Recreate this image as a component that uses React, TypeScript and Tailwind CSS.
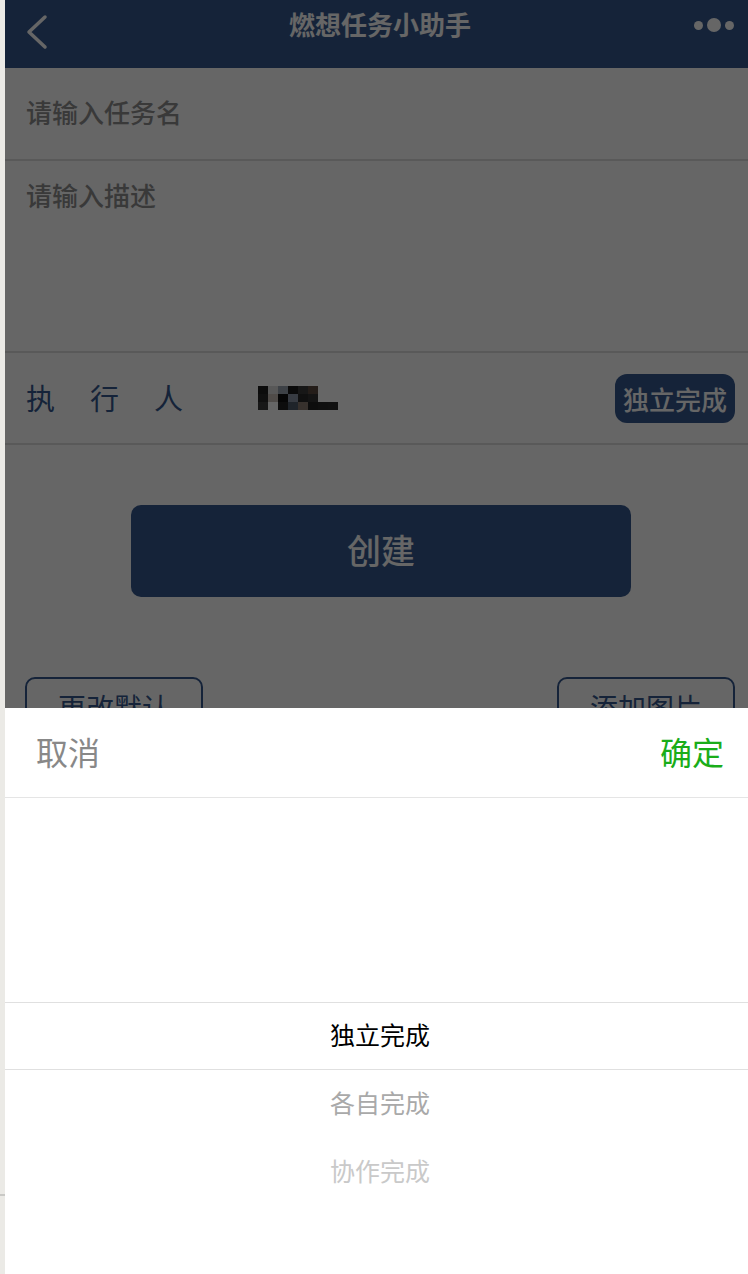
import React from 'react';

const font = { fontFamily: '"Noto Sans CJK SC", "Noto Sans", sans-serif' };

const options = ['独立完成', '各自完成', '协作完成'];

// mosaic blocks for the blurred name
const mosaic = [
  ['#1e1e1e', '#dcdcdc', '#9aa3b0', '#1a1a1a', '#3a3a3a', '#5a4a40', '#ffffff', '#ffffff'],
  ['#2a2a2a', '#c8bfb6', '#111111', '#8b95a5', '#2a2a2a', '#333333', '#ffffff', '#ffffff'],
  ['#3d3d3d', '#ffffff', '#222222', '#4f5a6a', '#8a7a70', '#222222', '#262626', '#2a2a2a'],
];

export default function App() {
  return (
    <div className="flex w-[748px] h-[1274px] overflow-hidden bg-white" style={font}>
      {/* left strip */}
      <div className="w-[5px] shrink-0 bg-[#ebeae6] flex flex-col">
        <div className="h-[1194px]" />
        <div className="h-[2px] bg-[#c9c9c6]" />
      </div>

      <div className="relative w-[750px] shrink-0 h-full bg-white">
        {/* header */}
        <div className="h-[68px] bg-[#36598f] flex items-center px-[20px]">
          <div className="w-[80px] flex">
            <svg width="24" height="36" viewBox="0 0 24 36" className="-mt-[4px]">
              <path d="M20 3 L4 18 L20 33" fill="none" stroke="#ffffff" strokeWidth="3.5" strokeLinecap="round" strokeLinejoin="round" />
            </svg>
          </div>
          <div className="flex-1 text-center text-[26px] font-bold text-white -mt-[22px]">燃想任务小助手</div>
          <div className="w-[80px] flex items-center justify-end gap-[4px] -mt-[18px] pr-[1px]">
            <span className="w-[9px] h-[9px] rounded-full bg-white" />
            <span className="w-[14px] h-[14px] rounded-full bg-white" />
            <span className="w-[9px] h-[9px] rounded-full bg-white" />
          </div>
        </div>

        {/* form */}
        <div className="h-[93px] border-b-2 border-[#dedede] flex items-center pl-[21px] pb-[4px] text-[26px] font-medium text-[#8f8f8f]">
          请输入任务名
        </div>
        <div className="h-[192px] border-b-2 border-[#dedede] pl-[21px] pt-[14px] text-[26px] font-medium text-[#8f8f8f] leading-[40px]">
          请输入描述
        </div>
        <div className="h-[92px] border-b-2 border-[#dedede] flex items-center pl-[21px] pr-[20px]">
          <span className="text-[29px] text-[#36598f] tracking-[35px] w-[232px]">执行人</span>
          <div className="flex flex-col">
            {mosaic.map((row, i) => (
              <div key={i} className="flex">
                {row.map((c, j) => (
                  <span key={j} className="w-[10px] h-[8px]" style={{ backgroundColor: c }} />
                ))}
              </div>
            ))}
          </div>
          <div className="ml-auto h-[49px] px-[8px] rounded-[12px] bg-[#36598f] text-white text-[26px] font-medium flex items-center">
            独立完成
          </div>
        </div>

        <div className="pt-[60px] pl-[126px]">
          <div className="w-[500px] h-[92px] pb-[4px] rounded-[10px] bg-[#36598f] text-white text-[34px] font-medium flex items-center justify-center">
            创建
          </div>
        </div>

        <div className="mt-[80px] flex justify-between px-[20px]">
          <div className="w-[178px] h-[60px] rounded-[10px] border-2 border-[#36598f] text-[#36598f] text-[28px] flex items-center justify-center">
            更改默认
          </div>
          <div className="w-[178px] h-[60px] rounded-[10px] border-2 border-[#36598f] text-[#36598f] text-[28px] flex items-center justify-center">
            添加图片
          </div>
        </div>

        {/* mask */}
        <div className="absolute inset-0 bg-black/60" />

        {/* picker sheet */}
        <div className="absolute left-0 right-0 bottom-0 h-[566px] bg-white flex flex-col">
          <div className="h-[90px] pb-[4px] border-b border-[#e5e5e5] flex items-center justify-between px-[31px] text-[32px]">
            <span className="text-[#888888]">取消</span>
            <span className="text-[#1aad19]">确定</span>
          </div>
          <div className="flex-1 flex flex-col">
            <div className="h-[204px]" />
            {options.map((o, i) => (
              <div
                key={o}
                className={
                  'h-[68px] pb-[3px] flex items-center justify-center text-[25px] ' +
                  (i === 0
                    ? 'text-black border-y border-[#e0e0e0]'
                    : i === 1
                    ? 'text-[#a9a9a9]'
                    : 'text-[#c9c9c9]')
                }
              >
                {o}
              </div>
            ))}
          </div>
        </div>
      </div>
    </div>
  );
}
